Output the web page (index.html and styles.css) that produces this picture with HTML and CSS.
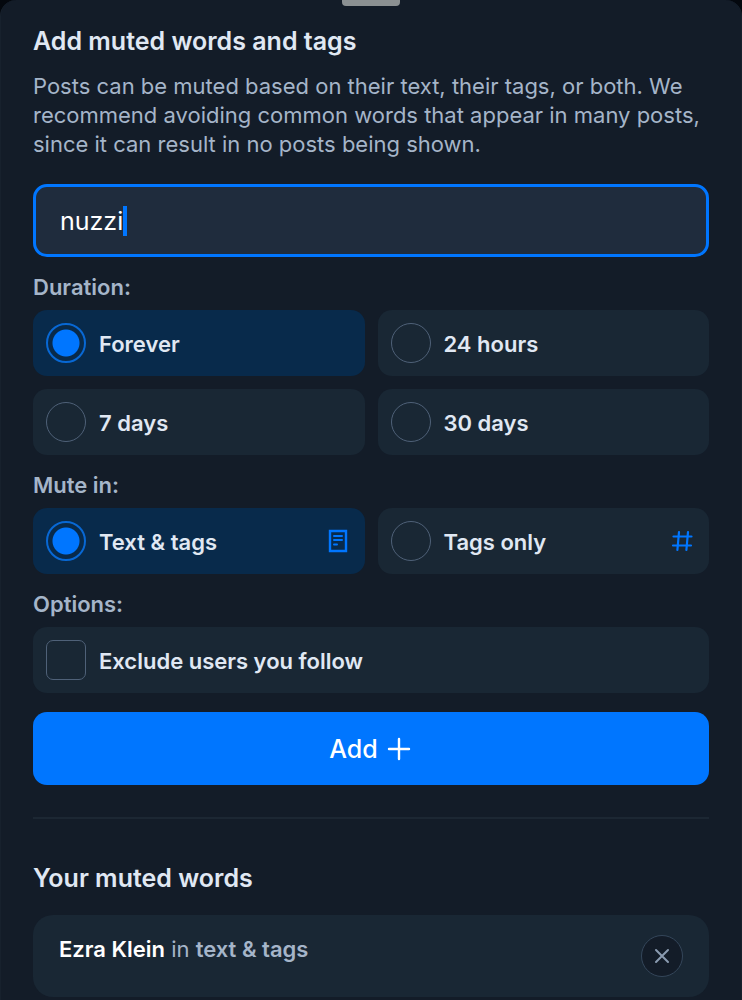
FILE: index.html
```html
<!DOCTYPE html>
<html lang="en">
<head>
<meta charset="utf-8">
<meta name="viewport" content="width=device-width, initial-scale=1">
<title>Add muted words and tags</title>
<link rel="stylesheet" href="styles.css">
</head>
<body>
<main class="sheet">
  <div class="handle"></div>
  <form class="form">
    <h1 class="title">Add muted words and tags</h1>
    <p class="intro">Posts can be muted based on their text, their tags, or both. We recommend avoiding common words that appear in many posts, since it can result in no posts being shown.</p>
    <label class="field">
      <input class="field-input" type="text" value="nuzzi" aria-label="Word or tag to mute">
      <span class="caret"></span>
    </label>

    <fieldset class="group">
      <legend class="legend">Duration:</legend>
      <div class="options">
        <label class="option"><input class="mark" type="radio" name="duration" checked><span class="option-text">Forever</span></label>
        <label class="option"><input class="mark" type="radio" name="duration"><span class="option-text">24 hours</span></label>
        <label class="option"><input class="mark" type="radio" name="duration"><span class="option-text">7 days</span></label>
        <label class="option"><input class="mark" type="radio" name="duration"><span class="option-text">30 days</span></label>
      </div>
    </fieldset>

    <fieldset class="group">
      <legend class="legend">Mute in:</legend>
      <div class="options">
        <label class="option"><input class="mark" type="radio" name="target" checked><span class="option-text">Text &amp; tags</span>
          <svg class="option-icon" viewBox="0 0 26 26" fill="none" stroke="currentColor" stroke-width="2"><path d="M4 3h16v20H4z" stroke-width="2.400"/><path d="M8 8h8M8 12h8M8 16.500h3" stroke-linecap="round"/></svg>
        </label>
        <label class="option"><input class="mark" type="radio" name="target"><span class="option-text">Tags only</span>
          <svg class="option-icon" viewBox="0 0 26 26" fill="none" stroke="currentColor" stroke-width="2.200" stroke-linecap="round"><path d="M9 4 7.400 22M18 4l-1.600 18M3.500 8.500h18M3 17.500h18"/></svg>
        </label>
      </div>
    </fieldset>

    <fieldset class="group">
      <legend class="legend">Options:</legend>
      <label class="option"><input class="mark mark-box" type="checkbox"><span class="option-text">Exclude users you follow</span></label>
    </fieldset>

    <button class="add" type="button">Add
      <svg class="add-icon" viewBox="0 0 26 26" fill="none" stroke="currentColor" stroke-width="2.400" stroke-linecap="round"><path d="M12 3v20M2 13h20"/></svg>
    </button>
  </form>

  <section class="muted">
    <h2 class="title">Your muted words</h2>
    <div class="word">
      <p class="word-text"><strong class="word-name">Ezra Klein</strong> in <strong class="word-where">text &amp; tags</strong></p>
      <button class="remove" type="button" aria-label="Remove Ezra Klein">
        <svg class="remove-icon" viewBox="0 0 18 18" fill="none" stroke="currentColor" stroke-width="2" stroke-linecap="round"><path d="m3 3 12 12M15 3 3 15"/></svg>
      </button>
    </div>
  </section>
</main>
</body>
</html>
```

FILE: styles.css
```css
* { box-sizing: border-box; }

body {
  margin: 0;
  background: #04080e;
  color: #e0e8f3;
  font: 400 22px/29px Inter, "Liberation Sans", sans-serif;
}

.sheet {
  min-height: 100vh;
  padding: 0 32px 3px;
  border: solid #17212d;
  border-width: 0 1px;
  border-radius: 16px 16px 0 0;
  background: #131c28;
}

.handle {
  width: 58px;
  height: 6px;
  margin: 0 auto;
  border-radius: 0 0 4px 4px;
  background: #8b9092;
}

.form {
  padding: 20px 0 32px;
  border-bottom: 2px solid #1c2733;
}

.title {
  margin: 0;
  font-size: 25px;
  font-weight: 600;
  line-height: 30px;
}

.intro {
  margin: 16px 0 25px;
  color: #a5b5c9;
}

.field {
  display: flex;
  align-items: center;
  height: 73px;
  padding: 0 24px;
  border: 3px solid #0076ff;
  border-radius: 14px;
  background: #1f2c3d;
}

.field-input {
  field-sizing: content;
  min-width: 0;
  padding: 0;
  border: 0;
  outline: 0;
  background: none;
  color: #fff;
  font: inherit;
  font-size: 25px;
  line-height: 30px;
}

.caret {
  width: 4px;
  height: 30px;
  background: #0076ff;
}

.group {
  min-width: 0;
  margin: 16px 0 0;
  padding: 0;
  border: 0;
}

.legend {
  margin-bottom: 8px;
  padding: 0;
  color: #a5b5c9;
  font-weight: 600;
}

.options {
  display: grid;
  grid-template-columns: 1fr 1fr;
  gap: 13px;
}

.option {
  display: flex;
  align-items: center;
  gap: 13px;
  padding: 13px;
  border-radius: 14px;
  background: #192734;
  font-weight: 600;
}

.option:has([type="radio"]:checked) { background: #082a4b; }

.mark {
  flex: none;
  width: 40px;
  height: 40px;
  margin: 0;
  border: 1px solid #4f6178;
  border-radius: 50%;
  appearance: none;
}

.mark:checked {
  border: 2px solid #0868d4;
  background: radial-gradient(circle, #0076ff 13px, transparent 14px);
}

.mark-box { border-radius: 7px; }

.option-text {
  flex: 1;
  padding-top: 3px;
}

.option-icon {
  width: 26px;
  height: 26px;
  color: #0076ff;
}

.add {
  display: flex;
  align-items: center;
  justify-content: center;
  gap: 9px;
  width: 100%;
  height: 73px;
  margin-top: 19px;
  border: 0;
  border-radius: 14px;
  background: #0076ff;
  color: #fff;
  font: 500 25px/30px Inter, "Liberation Sans", sans-serif;
}

.add-icon {
  width: 26px;
  height: 26px;
}

.muted { padding-top: 44px; }

.word {
  display: flex;
  align-items: flex-start;
  justify-content: space-between;
  margin-top: 22px;
  padding: 20px 26px;
  border-radius: 20px;
  background: #192734;
}

.word-text {
  margin: 0;
  color: #a5b5c9;
}

.word-name,
.word-where { font-weight: 600; }

.word-name { color: #fff; }

.remove {
  display: grid;
  place-items: center;
  width: 42px;
  height: 42px;
  padding: 0;
  border: 1px solid #34465a;
  border-radius: 50%;
  background: #131c28;
  color: #8a9bb0;
}

.remove-icon {
  width: 18px;
  height: 18px;
}
```
